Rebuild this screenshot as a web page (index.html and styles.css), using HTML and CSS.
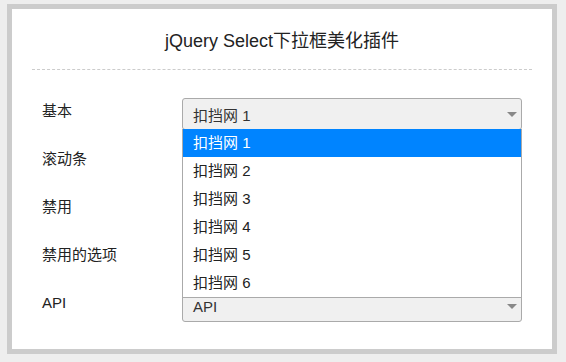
FILE: index.html
```html
<!DOCTYPE html>
<html lang="zh-CN">
<head>
<meta charset="utf-8">
<title>jQuery Select下拉框美化插件</title>
<link rel="stylesheet" href="styles.css">
</head>
<body>
<div class="panel">
  <h1 class="title">jQuery Select下拉框美化插件</h1>
  <div class="form">
    <div class="row">
      <div class="label">基本</div>
      <div class="field">
        <div class="select open"><span class="value">扣挡网 1</span><span class="arrow"></span></div>
        <ul class="dropdown">
          <li class="option selected">扣挡网 1</li>
          <li class="option">扣挡网 2</li>
          <li class="option">扣挡网 3</li>
          <li class="option">扣挡网 4</li>
          <li class="option">扣挡网 5</li>
          <li class="option">扣挡网 6</li>
        </ul>
      </div>
    </div>
    <div class="row">
      <div class="label">滚动条</div>
      <div class="field">
        <div class="select"><span class="value">扣挡网 1</span><span class="arrow"></span></div>
      </div>
    </div>
    <div class="row">
      <div class="label">禁用</div>
      <div class="field">
        <div class="select"><span class="value">扣挡网 1</span><span class="arrow"></span></div>
      </div>
    </div>
    <div class="row">
      <div class="label">禁用的选项</div>
      <div class="field">
        <div class="select"><span class="value">扣挡网 1</span><span class="arrow"></span></div>
      </div>
    </div>
    <div class="row">
      <div class="label">API</div>
      <div class="field">
        <div class="select"><span class="value">API</span><span class="arrow"></span></div>
      </div>
    </div>
  </div>
</div>
</body>
</html>
```

FILE: styles.css
```css
html, body {
  margin: 0;
  padding: 0;
}
body {
  background: #eeeeee;
  font-family: "Liberation Sans", "Noto Sans CJK SC", sans-serif;
  color: #333;
  padding-top: 4px;
}
.panel {
  box-sizing: border-box;
  width: 550px;
  height: 350px;
  margin-left: 7px;
  border: 5px solid #cccccc;
  background: #ffffff;
  padding: 0 20px;
}
.title {
  margin: 0;
  padding: 20px 0 16px;
  font-size: 18px;
  font-weight: normal;
  line-height: 24px;
  text-align: center;
  color: #222;
  border-bottom: 1px dashed #cccccc;
}
.form {
  padding: 28px 10px 0;
}
.row {
  display: flex;
  align-items: flex-start;
  margin-bottom: 16px;
}
.label {
  width: 140px;
  font-size: 15px;
  line-height: 26px;
  color: #222;
}
.field {
  position: relative;
  width: 340px;
}
.select {
  box-sizing: border-box;
  height: 32px;
  border: 1px solid #aaaaaa;
  border-radius: 3px;
  background: #f0f0f0;
  display: flex;
  align-items: center;
  justify-content: space-between;
  padding: 0 4px 0 10px;
  font-size: 15px;
  color: #333;
}
.arrow {
  width: 0;
  height: 0;
  border-left: 5px solid transparent;
  border-right: 5px solid transparent;
  border-top: 5px solid #888888;
}
.dropdown {
  position: absolute;
  top: 31px;
  left: 0;
  z-index: 10;
  box-sizing: border-box;
  width: 340px;
  margin: 0;
  padding: 0;
  list-style: none;
  background: #ffffff;
  border: 1px solid #aaaaaa;
  border-top: none;
}
.option {
  height: 28px;
  line-height: 28px;
  padding-left: 10px;
  font-size: 15px;
  color: #222;
}
.option.selected {
  background: #0084ff;
  color: #ffffff;
}
```
